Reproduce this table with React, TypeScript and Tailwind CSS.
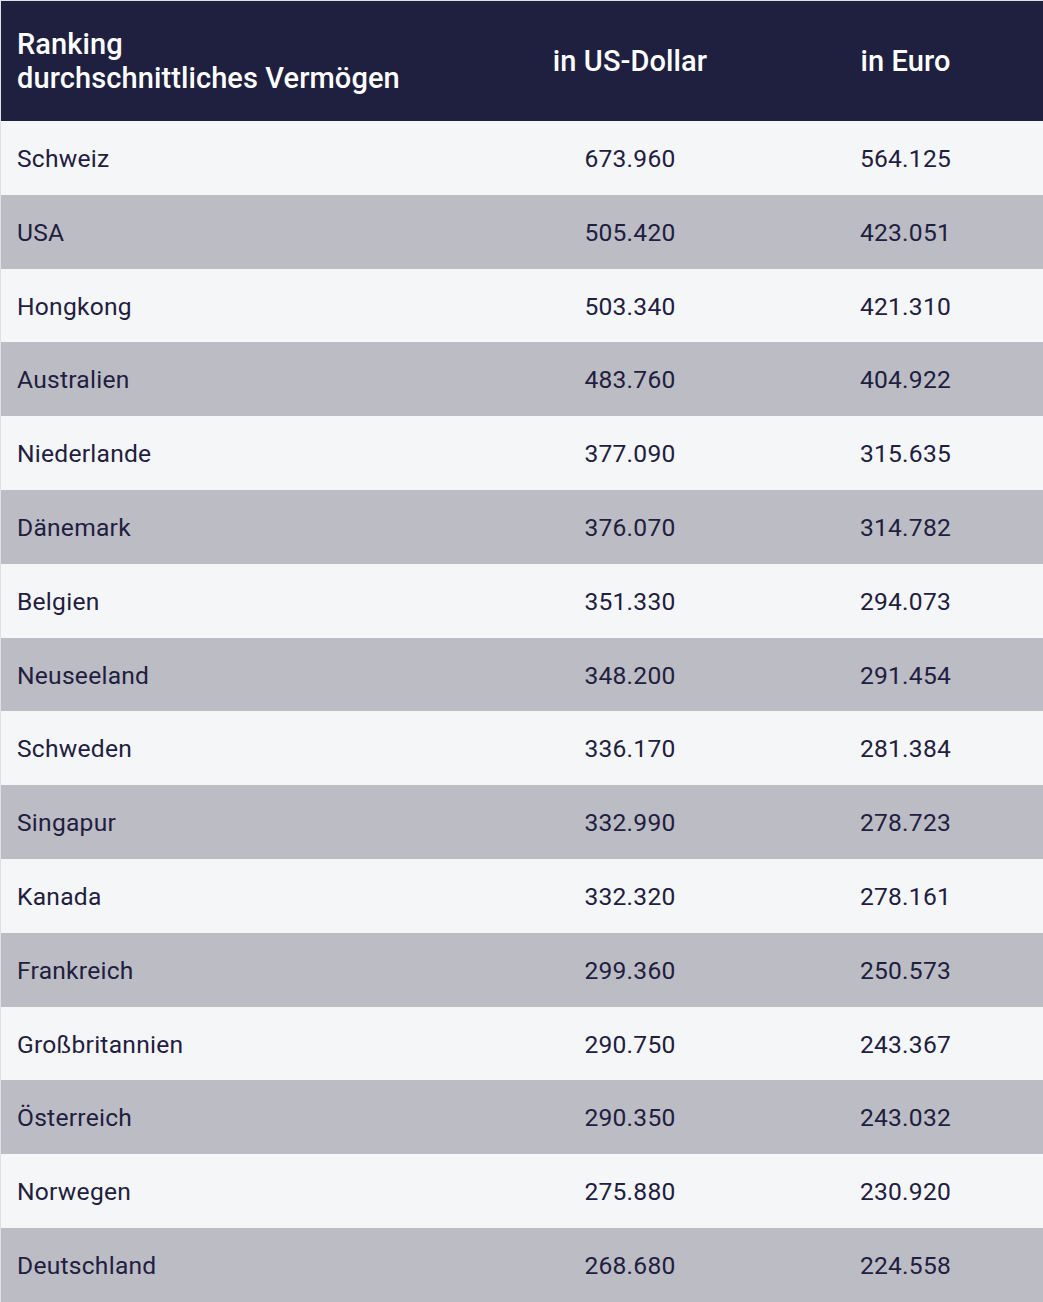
const rows: [string, string, string][] = [
  ['Schweiz', '673.960', '564.125'],
  ['USA', '505.420', '423.051'],
  ['Hongkong', '503.340', '421.310'],
  ['Australien', '483.760', '404.922'],
  ['Niederlande', '377.090', '315.635'],
  ['Dänemark', '376.070', '314.782'],
  ['Belgien', '351.330', '294.073'],
  ['Neuseeland', '348.200', '291.454'],
  ['Schweden', '336.170', '281.384'],
  ['Singapur', '332.990', '278.723'],
  ['Kanada', '332.320', '278.161'],
  ['Frankreich', '299.360', '250.573'],
  ['Großbritannien', '290.750', '243.367'],
  ['Österreich', '290.350', '243.032'],
  ['Norwegen', '275.880', '230.920'],
  ['Deutschland', '268.680', '224.558'],
];

export default function App() {
  return (
    <div className="w-[1043px] font-['Roboto',sans-serif] border-t border-l border-[#dfe1e6]">
      <div className="flex h-[120px] items-center bg-[#1f2040] text-white text-[29px] font-medium leading-[34px] tracking-[0.1px]">
        <div className="w-[491px] pl-4">
          Ranking
          <br />
          durchschnittliches Vermögen
        </div>
        <div className="w-[276px] text-center">in US-Dollar</div>
        <div className="flex-1 text-center">in Euro</div>
      </div>
      {rows.map(([land, usd, eur], i) => (
        <div
          key={land}
          className={`flex h-[73.8px] items-center pt-[3px] text-[24.6px] text-[#1f2040] tracking-[0.25px] ${
            i % 2 === 0 ? 'bg-[#f5f6f8]' : 'bg-[#bcbcc5]'
          }`}
        >
          <div className="w-[491px] pl-4">{land}</div>
          <div className="w-[276px] text-center">{usd}</div>
          <div className="flex-1 text-center">{eur}</div>
        </div>
      ))}
    </div>
  );
}
